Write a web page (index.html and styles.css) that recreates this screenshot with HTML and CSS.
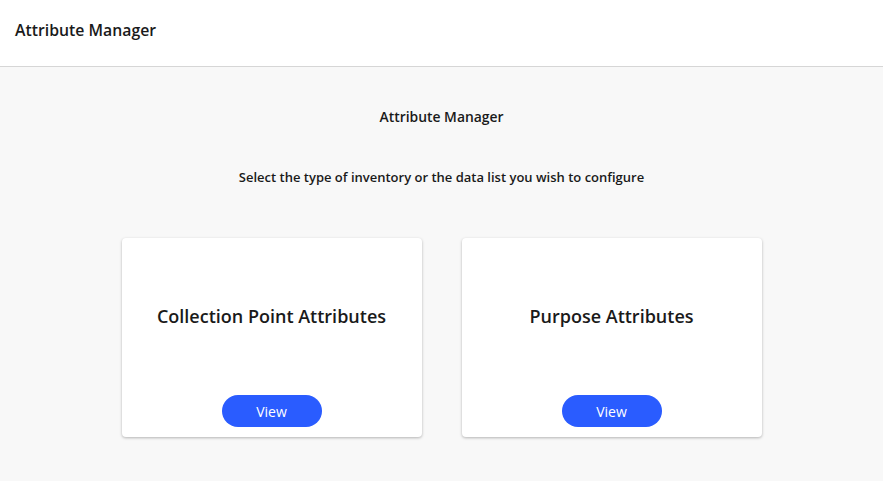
FILE: index.html
```html
<!DOCTYPE html>
<html>
<head>
<meta charset="utf-8">
<link rel="stylesheet" href="styles.css">
</head>
<body>
<header class="topbar">
  <h1 class="topbar-title">Attribute Manager</h1>
</header>
<main class="content">
  <h2 class="page-title">Attribute Manager</h2>
  <p class="page-subtitle">Select the type of inventory or the data list you wish to configure</p>
  <div class="cards">
    <div class="card">
      <div class="card-title">Collection Point Attributes</div>
      <button class="btn-view">View</button>
    </div>
    <div class="card">
      <div class="card-title">Purpose Attributes</div>
      <button class="btn-view">View</button>
    </div>
  </div>
</main>
</body>
</html>
```
FILE: styles.css
```css
* { box-sizing: border-box; }
html, body { margin: 0; padding: 0; }
body {
  font-family: "Open Sans", "Noto Sans", sans-serif;
  color: #1a1a1a;
  background: #f8f8f8;
  height: 481px;
  overflow: hidden;
}
.topbar {
  height: 67px;
  background: #ffffff;
  border-bottom: 1px solid #d6d6d6;
  display: flex;
  align-items: center;
  padding: 0 15px 6px;
}
.topbar-title {
  margin: 0;
  font-size: 15.8px;
  font-weight: 600;
  letter-spacing: 0;
}
.content {
  display: flex;
  flex-direction: column;
  align-items: center;
  padding-top: 40px;
}
.page-title {
  margin: 0;
  font-size: 13.9px;
  font-weight: 600;
  line-height: 20px;
}
.page-subtitle {
  margin: 40px 0 0;
  font-size: 13px;
  font-weight: 600;
  line-height: 20px;
}
.cards {
  display: flex;
  gap: 40px;
  margin-top: 51px;
}
.card {
  width: 300px;
  height: 199px;
  background: #ffffff;
  border-radius: 4px;
  box-shadow: 0 1px 3px rgba(0,0,0,0.28);
  display: flex;
  flex-direction: column;
  align-items: center;
  padding-top: 66px;
}
.card-title {
  font-size: 18px;
  font-weight: 600;
  line-height: 24px;
}
.btn-view {
  margin-top: 67px;
  width: 100px;
  height: 32px;
  border: none;
  border-radius: 16px;
  background: #2a5cff;
  color: #ffffff;
  font-family: "Open Sans", "Noto Sans", sans-serif;
  font-size: 14px;
  cursor: pointer;
}
```
